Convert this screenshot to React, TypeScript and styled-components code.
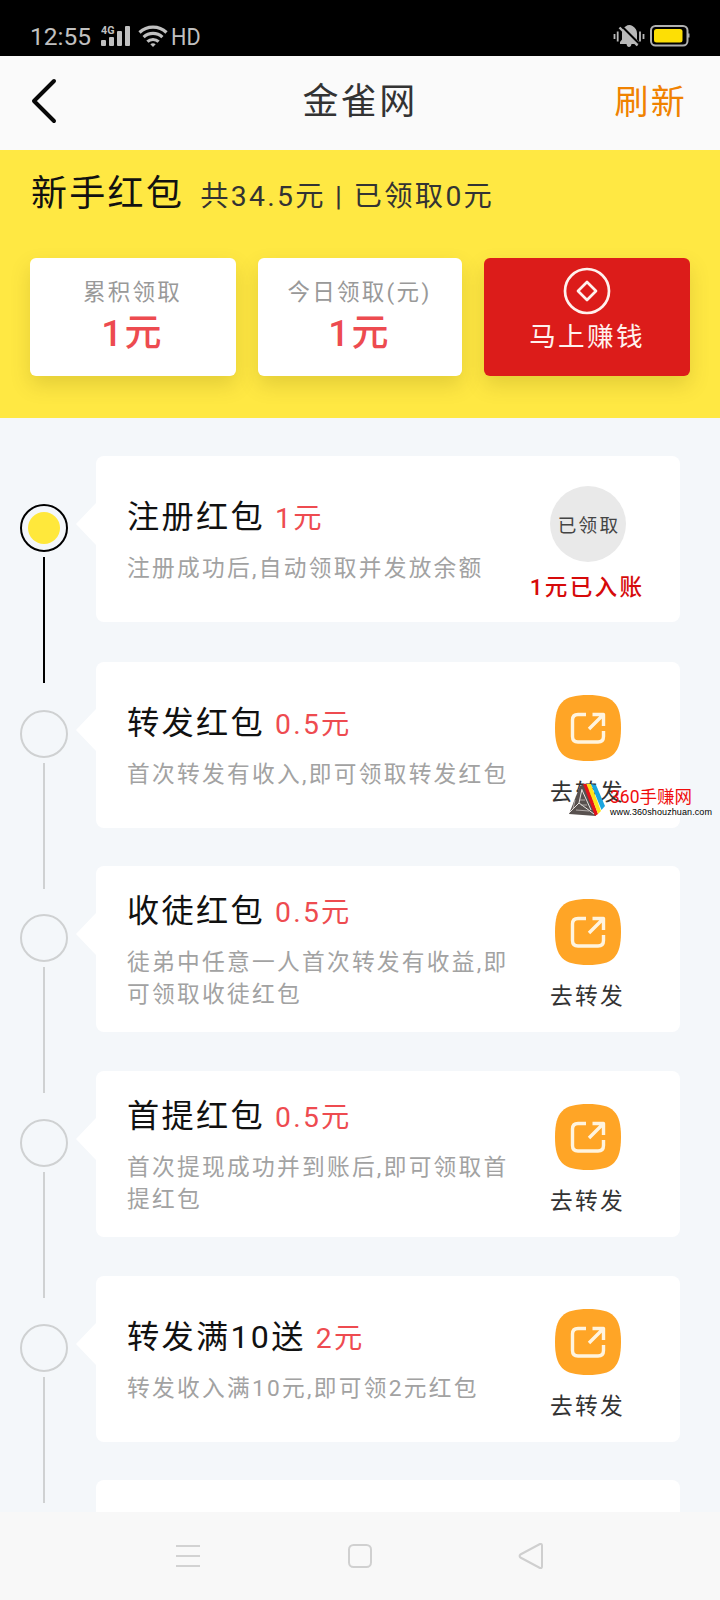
import React from "react";
import styled, { createGlobalStyle } from "styled-components";

const Global = createGlobalStyle`
  * { box-sizing: border-box; }
  body { margin: 0; background: #f4f7fa; }
`;

const Screen = styled.div`
  width: 720px;
  height: 1600px;
  display: flex;
  flex-direction: column;
  overflow: hidden;
  position: relative;
  background: #f4f7fa;
  font-family: Roboto, "Noto Sans CJK SC", sans-serif;
  letter-spacing: 2.3px;
  white-space: nowrap;
`;

const StatusBar = styled.div`
  flex: none;
  height: 56px;
  padding: 16px 30px 0 30px;
  display: flex;
  align-items: center;
  justify-content: space-between;
  background: #000;
  color: #c0c0c0;
  letter-spacing: 0;
`;

const StatusGroup = styled.div<{ $gap: number }>`
  display: flex;
  align-items: center;
  gap: ${(p) => p.$gap}px;
`;

const Clock = styled.span`
  width: 64px;
  font-size: 24.5px;
  line-height: 28px;
  padding-top: 2px;
`;

const NetworkMode = styled.span`
  font-size: 24px;
  line-height: 28px;
  padding-top: 2px;
  margin-left: -4px;
  transform: scaleX(0.9);
  transform-origin: left;
`;

const TitleBar = styled.header`
  flex: none;
  height: 94px;
  padding: 0 34px 0 31px;
  display: grid;
  grid-template-columns: 100px 1fr 100px;
  align-items: center;
  background: #fafafa;
`;

const BackButton = styled.svg`
  width: 28px;
  height: 46px;
  margin-top: -5px;
`;

const PageTitle = styled.h1`
  margin: 0;
  padding: 0 0 2px 3px;
  font-size: 36px;
  font-weight: 400;
  line-height: 50px;
  text-align: center;
  color: #333;
`;

const Refresh = styled.a`
  justify-self: end;
  padding-bottom: 2px;
  font-size: 34px;
  line-height: 50px;
  margin-right: -1px;
  color: #f08200;
`;

const Hero = styled.section`
  flex: none;
  height: 268px;
  padding: 19px 30px 0;
  background: #ffe843;
`;

const HeroHeading = styled.div`
  display: flex;
  align-items: baseline;
  height: 89px;
  padding-left: 1px;
  line-height: 50px;
`;

const HeroTitle = styled.span`
  font-size: 36px;
  color: #111;
  margin-right: 16px;
`;

const HeroSummary = styled.span`
  font-size: 28.3px;
  color: #333;
`;

const StatRow = styled.div`
  display: grid;
  grid-template-columns: 206px 204px 206px;
  justify-content: space-between;
`;

const StatCard = styled.div<{ $accent?: boolean }>`
  height: 118px;
  padding-top: ${(p) => (p.$accent ? 9 : 18)}px;
  display: flex;
  flex-direction: column;
  align-items: center;
  border-radius: 6px;
  color: #fff;
  background: ${(p) => (p.$accent ? "#dc1c1a" : "#fff")};
  box-shadow: 0 9px 20px rgba(90, 80, 0, 0.17);
`;

const StatLabel = styled.span`
  font-size: 22.5px;
  line-height: 32px;
  margin-left: -1px;
  color: #999;
`;

const StatValue = styled.span`
  font-size: 37px;
  line-height: 48px;
  margin: 2px 0 0 -1px;
  font-weight: 500;
  color: #ed4b50;
`;

const EarnLabel = styled.span`
  font-size: 26.6px;
  line-height: 40px;
  margin-top: 2px;
  color: #fff2ee;
`;

const Timeline = styled.main`
  flex: 1;
  min-height: 0;
  overflow: hidden;
  padding: 38px 40px 0 20px;
`;

const Step = styled.div<{ $pitch: number }>`
  display: flex;
  height: ${(p) => p.$pitch}px;
`;

const Rail = styled.div<{ $done?: boolean }>`
  flex: none;
  width: 76px;
  padding-top: 48px;
  display: flex;
  flex-direction: column;
  --rail: ${(p) => (p.$done ? "#000" : "#cfd1d2")};
`;

const Marker = styled.div`
  flex: none;
  width: 48px;
  height: 48px;
  border: 2px solid var(--rail);
  border-radius: 50%;
  display: flex;
  align-items: center;
  justify-content: center;
`;

const MarkerDot = styled.div`
  width: 32px;
  height: 32px;
  border-radius: 50%;
  background: #ffe83b;
`;

const Connector = styled.div`
  flex: none;
  width: 2px;
  height: 126px;
  margin: 5px 0 0 23px;
  background: var(--rail);
`;

const Card = styled.article`
  position: relative;
  flex: 1;
  height: 166px;
  padding-left: 31px;
  display: flex;
  border-radius: 8px;
  background: #fff;
  &::before {
    content: "";
    position: absolute;
    left: -20px;
    top: 47px;
    border: solid transparent;
    border-width: 21px 20px 21px 0;
    border-right-color: #fff;
  }
`;

const CardText = styled.div`
  flex: none;
  width: 391px;
  padding-top: 1px;
  display: flex;
  flex-direction: column;
  justify-content: center;
`;

const CardTitle = styled.h2`
  margin: 1px 0 13px;
  font-size: 32.2px;
  font-weight: 400;
  line-height: 43px;
  color: #111;
`;

const Amount = styled.span`
  font-size: 28.3px;
  margin-left: 10px;
  color: #ee4b50;
`;

const CardNote = styled.p`
  margin: 0;
  font-size: 22.7px;
  line-height: 32px;
  color: #a2a2a2;
`;

const CardAction = styled.div`
  width: 140px;
  display: flex;
  flex-direction: column;
  align-items: center;
`;

const ShareBadge = styled.svg`
  display: block;
  width: 68px;
  height: 68px;
  margin-top: 32px;
`;

const ActionLabel = styled.span`
  margin-top: 14px;
  font-size: 22.7px;
  line-height: 34px;
  margin-left: -1px;
  color: #333;
`;

const ClaimedBadge = styled.div`
  width: 76px;
  height: 76px;
  margin: 30px 0 0;
  padding-left: 2px;
  border-radius: 50%;
  background: #e9e9e9;
  font-size: 18.6px;
  line-height: 80px;
  text-align: center;
  color: #444;
`;

const CreditedLabel = styled.span`
  margin-top: 9px;
  margin-left: -2px;
  font-size: 22.6px;
  line-height: 34px;
  font-weight: 500;
  color: #d60a0a;
`;

const Watermark = styled.div`
  position: absolute;
  left: 569px;
  top: 783px;
  display: flex;
  letter-spacing: 0;
`;

const WatermarkText = styled.div`
  margin-left: 4px;
  display: flex;
  flex-direction: column;
`;

const WatermarkName = styled.span`
  font-size: 17.5px;
  line-height: 22px;
  margin-top: 3px;
  color: #f00d0d;
`;

const WatermarkSite = styled.span`
  font-family: "Liberation Sans", sans-serif;
  font-size: 9px;
  line-height: 9px;
  letter-spacing: 0.1px;
  color: #000;
`;

const NavBar = styled.nav`
  flex: none;
  height: 88px;
  padding: 0 174px;
  display: flex;
  align-items: center;
  justify-content: space-between;
  background: #f8f8f8;
`;

type StepData = { title: string; amount: string; note: string[]; pitch: number; done?: boolean };

const steps: StepData[] = [
  { title: "注册红包", amount: "1元", note: ["注册成功后,自动领取并发放余额"], pitch: 206, done: true },
  { title: "转发红包", amount: "0.5元", note: ["首次转发有收入,即可领取转发红包"], pitch: 204 },
  { title: "收徒红包", amount: "0.5元", note: ["徒弟中任意一人首次转发有收益,即", "可领取收徒红包"], pitch: 205 },
  { title: "首提红包", amount: "0.5元", note: ["首次提现成功并到账后,即可领取首", "提红包"], pitch: 205 },
  { title: "转发满10送", amount: "2元", note: ["转发收入满10元,即可领2元红包"], pitch: 204 },
];

const SignalIcon = () => (
  <svg width="30" height="22" viewBox="0 0 30 22" fill="#c0c0c0">
    <rect x="0" y="15" width="5" height="6" rx="1" />
    <rect x="8" y="12" width="5" height="9" rx="1" />
    <rect x="16" y="6" width="5" height="15" rx="1" />
    <rect x="24" y="1" width="5" height="20" rx="1" />
    <text x="0" y="9" fontSize="11" fontWeight="700" textLength="13.5" lengthAdjust="spacingAndGlyphs">4G</text>
  </svg>
);

const WifiIcon = () => (
  <svg width="30" height="22" viewBox="0 0 30 22" fill="none" stroke="#c0c0c0" strokeWidth="3.2">
    <path d="M1.5 7.5C9 .4 21 .4 28.5 7.5" />
    <path d="M5.600 12.2C11 7.200 19 7.200 24.400 12.2" />
    <path d="M9.400 16.600C12.500 13.800 17.500 13.800 20.600 16.600" />
    <path d="M12.300 19.200Q15 17.200 17.700 19.200L15 22Z" fill="#c0c0c0" stroke="none" />
  </svg>
);

const SilentIcon = () => (
  <svg width="32" height="24" viewBox="0 0 32 24" fill="#b8b8b8">
    <path d="M1.500 10v5M4.700 7.500v10M27 7.500v10M30.500 10v5" stroke="#b8b8b8" strokeWidth="1.800" />
    <path d="M7 20V18l2-2.500V9Q9 4 12.500 2.500Q16 0 19.500 2Q24 4.500 24 9.500v6l2 2.500v2h-7.500q-.5 3-2.500 3t-2.500-3Z" />
    <path d="M8.500 2 26 19.500" stroke="#000" strokeWidth="2.200" />
    <path d="M6.500 3.500 24.500 21.500" stroke="#b8b8b8" strokeWidth="2.400" />
  </svg>
);

const BatteryIcon = () => (
  <svg width="40" height="22" viewBox="0 0 40 22">
    <rect x="1" y="1" width="36.500" height="19.500" rx="4.500" fill="none" stroke="#b0b0b0" strokeWidth="2" />
    <rect x="4" y="4" width="28.500" height="13.500" rx="2.500" fill="#fddf05" />
    <path d="M38.500 8.500v4" stroke="#b0b0b0" strokeWidth="2" />
  </svg>
);

const BackIcon = () => (
  <BackButton viewBox="0 0 28 46" fill="none" stroke="#080808" strokeWidth="4">
    <path d="M23 3 3 23 23 43" strokeLinecap="round" strokeLinejoin="round" />
  </BackButton>
);

const CoinIcon = () => (
  <svg width="48" height="48" viewBox="0 0 48 48" fill="none" stroke="#fff2ee" strokeWidth="2.700">
    <circle cx="24" cy="24" r="22" />
    <path d="M24 15 33 24 24 33 15 24Z" strokeLinejoin="round" />
  </svg>
);

const ShareIcon = () => (
  <ShareBadge viewBox="0 0 68 68">
    <path d="M34 1C59 1 67 9 67 34S59 67 34 67 1 59 1 34 9 1 34 1Z" fill="#ffa526" />
    <g fill="none" stroke="#fff4df" strokeWidth="3.400" strokeLinejoin="round">
      <path d="M32 20.500H24Q18.500 20.500 18.500 26V42.500Q18.500 48 24 48H44Q49.500 48 49.500 42.500V37" />
      <path d="M35 35 49 21M38.500 20.500H49.500V32" />
    </g>
  </ShareBadge>
);

const WatermarkLogo = () => (
  <svg width="37" height="33" viewBox="0 0 37 33">
    <path d="M11 3 0 31 27 33 15 1Z" fill="#58514f" />
    <path d="M13 6 10 20 0 30M10 20 25 31M13 7l9 20" stroke="#e8e4e2" strokeWidth="1" fill="none" />
    <path d="M6 17 4 26M16 17l-5 0M18 22l-6 0M7 27l13 1" stroke="#c8c2c0" strokeWidth=".8" fill="none" />
    <path d="M14 1 18 1 29 31 26 33Z" fill="#e3131b" />
    <path d="M17.500 1 22 1 32 28 29 31Z" fill="#ffe21a" />
    <path d="M22 1 27 2 36 23 32.500 27Z" fill="#1ba5df" />
  </svg>
);

export default function App() {
  return (
    <Screen>
      <Global />
      <StatusBar>
        <StatusGroup $gap={7}>
          <Clock>12:55</Clock>
          <SignalIcon />
          <WifiIcon />
          <NetworkMode>HD</NetworkMode>
        </StatusGroup>
        <StatusGroup $gap={5}>
          <SilentIcon />
          <BatteryIcon />
        </StatusGroup>
      </StatusBar>
      <TitleBar>
        <BackIcon />
        <PageTitle>金雀网</PageTitle>
        <Refresh>刷新</Refresh>
      </TitleBar>
      <Hero>
        <HeroHeading>
          <HeroTitle>新手红包</HeroTitle>
          <HeroSummary>共34.5元 | 已领取0元</HeroSummary>
        </HeroHeading>
        <StatRow>
          <StatCard>
            <StatLabel>累积领取</StatLabel>
            <StatValue>1元</StatValue>
          </StatCard>
          <StatCard>
            <StatLabel>今日领取(元)</StatLabel>
            <StatValue>1元</StatValue>
          </StatCard>
          <StatCard $accent>
            <CoinIcon />
            <EarnLabel>马上赚钱</EarnLabel>
          </StatCard>
        </StatRow>
      </Hero>
      <Timeline>
        {steps.map((s) => (
          <Step key={s.title} $pitch={s.pitch}>
            <Rail $done={s.done}>
              <Marker>{s.done && <MarkerDot />}</Marker>
              <Connector />
            </Rail>
            <Card>
              <CardText>
                <CardTitle>
                  {s.title}
                  <Amount>{s.amount}</Amount>
                </CardTitle>
                {s.note.map((line) => (
                  <CardNote key={line}>{line}</CardNote>
                ))}
              </CardText>
              <CardAction>
                {s.done ? (
                  <>
                    <ClaimedBadge>已领取</ClaimedBadge>
                    <CreditedLabel>1元已入账</CreditedLabel>
                  </>
                ) : (
                  <>
                    <ShareIcon />
                    <ActionLabel>去转发</ActionLabel>
                  </>
                )}
              </CardAction>
            </Card>
          </Step>
        ))}
        <Step $pitch={166}>
          <Rail />
          <Card />
        </Step>
      </Timeline>
      <NavBar>
        <svg width="28" height="28" viewBox="0 0 28 28" stroke="#d2d2d2" strokeWidth="2">
          <path d="M2 4h24M2 14h24M2 24h24" />
        </svg>
        <svg width="28" height="28" viewBox="0 0 28 28" fill="none" stroke="#d0d0d0" strokeWidth="2">
          <rect x="3" y="3" width="22" height="22" rx="4.500" />
        </svg>
        <svg width="28" height="28" viewBox="0 0 28 28" fill="none" stroke="#cfcfcf" strokeWidth="2" strokeLinejoin="round">
          <path d="M2.400 12.500 22 2Q24 1.500 24 3.500V24.500Q24 26.500 22 26L2.400 15.500Q.8 14 2.400 12.500Z" />
        </svg>
      </NavBar>
      <Watermark>
        <WatermarkLogo />
        <WatermarkText>
          <WatermarkName>360手赚网</WatermarkName>
          <WatermarkSite>www.360shouzhuan.com</WatermarkSite>
        </WatermarkText>
      </Watermark>
    </Screen>
  );
}
